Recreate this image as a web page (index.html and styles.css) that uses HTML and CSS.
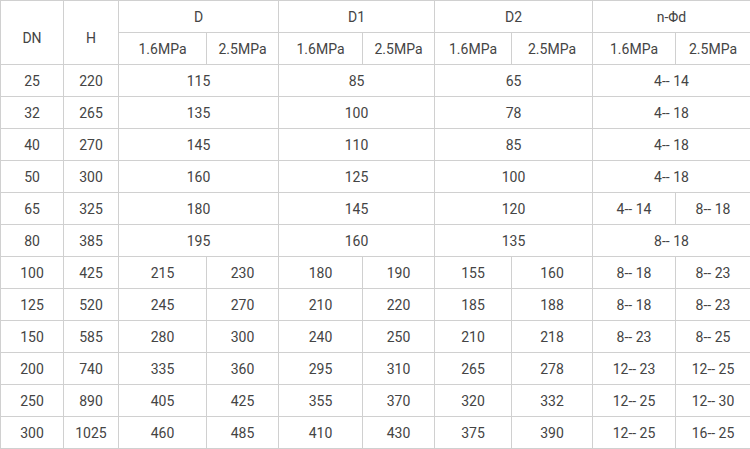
FILE: index.html
```html
<!DOCTYPE html>
<html>
<head>
<meta charset="utf-8">
<link rel="stylesheet" href="styles.css">
</head>
<body>
<table class="spec">
<colgroup>
<col class="c1"><col class="c2"><col class="c3"><col class="c4"><col class="c5"><col class="c6"><col class="c7"><col class="c8"><col class="c9"><col class="c10">
</colgroup>
<tr><td rowspan="2" class="tall">DN</td><td rowspan="2" class="tall">H</td><td colspan="2">D</td><td colspan="2">D1</td><td colspan="2">D2</td><td colspan="2">n-Φd</td></tr>
<tr><td>1.6MPa</td><td>2.5MPa</td><td>1.6MPa</td><td>2.5MPa</td><td>1.6MPa</td><td>2.5MPa</td><td>1.6MPa</td><td>2.5MPa</td></tr>
<tr><td>25</td><td>220</td><td colspan="2">115</td><td colspan="2">85</td><td colspan="2">65</td><td colspan="2">4-- 14</td></tr>
<tr><td>32</td><td>265</td><td colspan="2">135</td><td colspan="2">100</td><td colspan="2">78</td><td colspan="2">4-- 18</td></tr>
<tr><td>40</td><td>270</td><td colspan="2">145</td><td colspan="2">110</td><td colspan="2">85</td><td colspan="2">4-- 18</td></tr>
<tr><td>50</td><td>300</td><td colspan="2">160</td><td colspan="2">125</td><td colspan="2">100</td><td colspan="2">4-- 18</td></tr>
<tr><td>65</td><td>325</td><td colspan="2">180</td><td colspan="2">145</td><td colspan="2">120</td><td>4-- 14</td><td>8-- 18</td></tr>
<tr><td>80</td><td>385</td><td colspan="2">195</td><td colspan="2">160</td><td colspan="2">135</td><td colspan="2">8-- 18</td></tr>
<tr><td>100</td><td>425</td><td>215</td><td>230</td><td>180</td><td>190</td><td>155</td><td>160</td><td>8-- 18</td><td>8-- 23</td></tr>
<tr><td>125</td><td>520</td><td>245</td><td>270</td><td>210</td><td>220</td><td>185</td><td>188</td><td>8-- 18</td><td>8-- 23</td></tr>
<tr><td>150</td><td>585</td><td>280</td><td>300</td><td>240</td><td>250</td><td>210</td><td>218</td><td>8-- 23</td><td>8-- 25</td></tr>
<tr><td>200</td><td>740</td><td>335</td><td>360</td><td>295</td><td>310</td><td>265</td><td>278</td><td>12-- 23</td><td>12-- 25</td></tr>
<tr><td>250</td><td>890</td><td>405</td><td>425</td><td>355</td><td>370</td><td>320</td><td>332</td><td>12-- 25</td><td>12-- 30</td></tr>
<tr><td>300</td><td>1025</td><td>460</td><td>485</td><td>410</td><td>430</td><td>375</td><td>390</td><td>12-- 25</td><td>16-- 25</td></tr>
</table>
</body>
</html>
```
FILE: styles.css
```css
html, body {
  margin: 0;
  padding: 0;
  background: #fff;
}
.spec {
  border-collapse: collapse;
  table-layout: fixed;
  width: 750px;
  font-family: Roboto, "Liberation Sans", sans-serif;
  font-size: 14px;
  color: #444;
}
.spec td {
  border: 1px solid #d0d0d0;
  height: 31px;
  padding: 0;
  text-align: center;
  vertical-align: middle;
  line-height: 16px;
}
.spec td.tall {
  padding-top: 10px;
}
.c1 { width: 63px; }
.c2 { width: 55px; }
.c3 { width: 88px; }
.c4 { width: 72px; }
.c5 { width: 84px; }
.c6 { width: 72px; }
.c7 { width: 77px; }
.c8 { width: 81px; }
.c9 { width: 83px; }
.c10 { width: 75px; }
```
